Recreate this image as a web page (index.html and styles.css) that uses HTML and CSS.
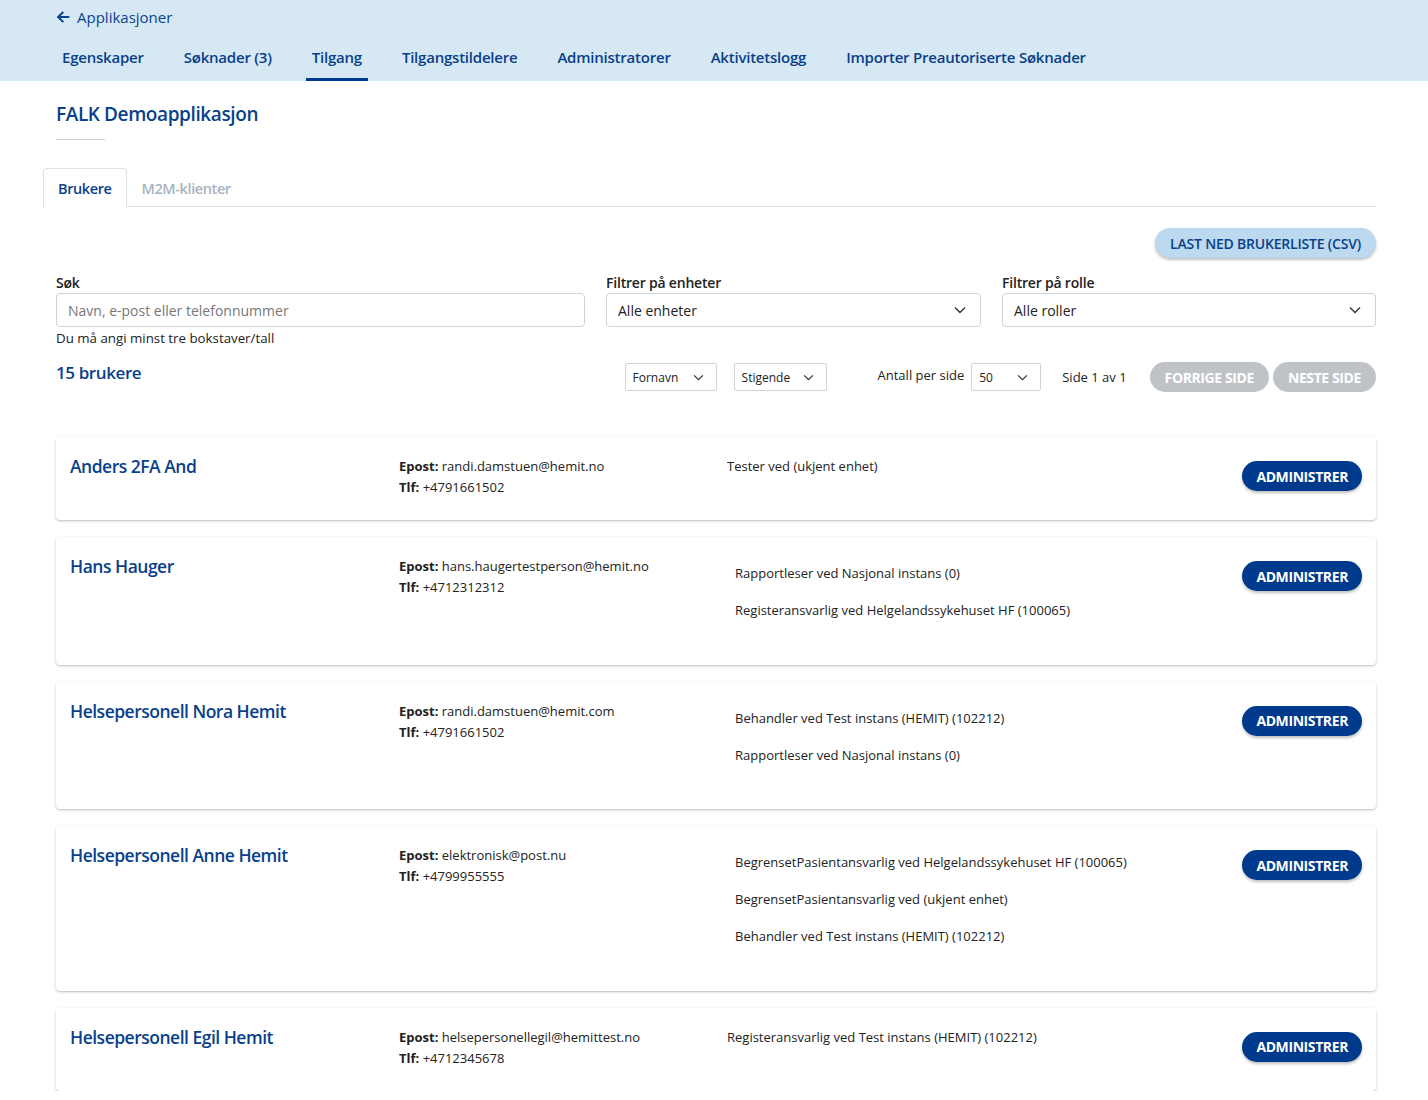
FILE: index.html
```html
<!DOCTYPE html>
<html lang="no">
<head>
<meta charset="utf-8">
<title>FALK Demoapplikasjon</title>
<link rel="stylesheet" href="styles.css">
</head>
<body>
<header class="topbar">
  <a class="back" href="#"><svg class="back-icon" viewBox="0 0 16 16" width="14" height="14"><path d="M14 8H3M7.5 3L2.5 8l5 5" fill="none" stroke="currentColor" stroke-width="2.4" stroke-linecap="square"/></svg>Applikasjoner</a>
  <nav class="nav">
    <a href="#" class="nav-item">Egenskaper</a>
    <a href="#" class="nav-item">Søknader (3)</a>
    <a href="#" class="nav-item active">Tilgang</a>
    <a href="#" class="nav-item">Tilgangstildelere</a>
    <a href="#" class="nav-item">Administratorer</a>
    <a href="#" class="nav-item">Aktivitetslogg</a>
    <a href="#" class="nav-item">Importer Preautoriserte Søknader</a>
  </nav>
</header>

<main class="main">
  <h1 class="title">FALK Demoapplikasjon</h1>
  <div class="title-rule"></div>

  <div class="tabs">
    <div class="tab active">Brukere</div>
    <div class="tab">M2M-klienter</div>
  </div>

  <div class="download-row">
    <button class="btn-light">LAST NED BRUKERLISTE (CSV)</button>
  </div>

  <div class="filters">
    <div class="field">
      <label class="label">Søk</label>
      <div class="input placeholder">Navn, e-post eller telefonnummer</div>
      <div class="hint">Du må angi minst tre bokstaver/tall</div>
    </div>
    <div class="field">
      <label class="label">Filtrer på enheter</label>
      <div class="input select">Alle enheter<svg class="chev" viewBox="0 0 12 8" width="12" height="8"><path d="M1 1.5l5 5 5-5" fill="none" stroke="#333" stroke-width="1.4"/></svg></div>
    </div>
    <div class="field">
      <label class="label">Filtrer på rolle</label>
      <div class="input select">Alle roller<svg class="chev" viewBox="0 0 12 8" width="12" height="8"><path d="M1 1.5l5 5 5-5" fill="none" stroke="#333" stroke-width="1.4"/></svg></div>
    </div>
  </div>

  <div class="toolbar">
    <h2 class="count">15 brukere</h2>
    <div class="controls">
      <div class="mini-select w-fornavn">Fornavn<svg class="chev" viewBox="0 0 12 8" width="11" height="7"><path d="M1 1.5l5 5 5-5" fill="none" stroke="#333" stroke-width="1.4"/></svg></div>
      <div class="mini-select w-stigende">Stigende<svg class="chev" viewBox="0 0 12 8" width="11" height="7"><path d="M1 1.5l5 5 5-5" fill="none" stroke="#333" stroke-width="1.4"/></svg></div>
      <span class="per-page">Antall per side</span>
      <div class="mini-select w-num">50<svg class="chev" viewBox="0 0 12 8" width="11" height="7"><path d="M1 1.5l5 5 5-5" fill="none" stroke="#333" stroke-width="1.4"/></svg></div>
      <span class="page-info">Side 1 av 1</span>
      <div class="pager">
        <button class="btn-disabled">FORRIGE SIDE</button>
        <button class="btn-disabled">NESTE SIDE</button>
      </div>
    </div>
  </div>

  <section class="list">
    <article class="card">
      <div class="name">Anders 2FA And</div>
      <div class="contact"><div><b>Epost:</b> randi.damstuen@hemit.no</div><div><b>Tlf:</b> +4791661502</div></div>
      <div class="roles"><div>Tester ved (ukjent enhet)</div></div>
      <div class="action"><button class="btn-dark">ADMINISTRER</button></div>
    </article>

    <article class="card">
      <div class="name">Hans Hauger</div>
      <div class="contact"><div><b>Epost:</b> hans.haugertestperson@hemit.no</div><div><b>Tlf:</b> +4712312312</div></div>
      <div class="roles multi"><p>Rapportleser ved Nasjonal instans (0)</p><p>Registeransvarlig ved Helgelandssykehuset HF (100065)</p></div>
      <div class="action"><button class="btn-dark">ADMINISTRER</button></div>
    </article>

    <article class="card">
      <div class="name">Helsepersonell Nora Hemit</div>
      <div class="contact"><div><b>Epost:</b> randi.damstuen@hemit.com</div><div><b>Tlf:</b> +4791661502</div></div>
      <div class="roles multi"><p>Behandler ved Test instans (HEMIT) (102212)</p><p>Rapportleser ved Nasjonal instans (0)</p></div>
      <div class="action"><button class="btn-dark">ADMINISTRER</button></div>
    </article>

    <article class="card">
      <div class="name">Helsepersonell Anne Hemit</div>
      <div class="contact"><div><b>Epost:</b> elektronisk@post.nu</div><div><b>Tlf:</b> +4799955555</div></div>
      <div class="roles multi"><p>BegrensetPasientansvarlig ved Helgelandssykehuset HF (100065)</p><p>BegrensetPasientansvarlig ved (ukjent enhet)</p><p>Behandler ved Test instans (HEMIT) (102212)</p></div>
      <div class="action"><button class="btn-dark">ADMINISTRER</button></div>
    </article>

    <article class="card">
      <div class="name">Helsepersonell Egil Hemit</div>
      <div class="contact"><div><b>Epost:</b> helsepersonellegil@hemittest.no</div><div><b>Tlf:</b> +4712345678</div></div>
      <div class="roles"><div>Registeransvarlig ved Test instans (HEMIT) (102212)</div></div>
      <div class="action"><button class="btn-dark">ADMINISTRER</button></div>
    </article>
  </section>
</main>
</body>
</html>
```

FILE: styles.css
```css
* { box-sizing: border-box; }

body {
  margin: 0;
  font-family: "Open Sans", "Noto Sans", sans-serif;
  color: #222;
  background: #fff;
  font-size: 14px;
}

a { text-decoration: none; }

.topbar {
  background: #d6e8f4;
  height: 81px;
  padding: 0 0 0 56px;
  display: flex;
  flex-direction: column;
}

.back {
  display: flex;
  align-items: center;
  gap: 7px;
  color: #0a4390;
  font-size: 15px;
  margin-top: 7px;
  height: 20px;
}

.back-icon { color: #0a4390; }

.nav {
  display: flex;
  margin-top: 12px;
}

.nav-item {
  color: #0a3f8a;
  font-weight: 600;
  font-size: 15px;
  padding: 8px 6px 0;
  height: 42px;
  margin-right: 28px;
  border-bottom: 3px solid transparent;
  letter-spacing: -0.22px;
}
.nav-item.active { border-bottom-color: #003a8c; }

.main {
  padding: 0 52px 0 56px;
}

.title {
  color: #0a3f8a;
  font-size: 19px;
  font-weight: 600;
  margin: 20px 0 0;
  line-height: 26px;
  letter-spacing: -0.4px;
}

.title-rule {
  width: 49px;
  height: 1px;
  background: #c4d0dc;
  margin-top: 12px;
}

.tabs {
  display: flex;
  margin: 28px 0 0 -13px;
  border-bottom: 1px solid #dee2e6;
  height: 39px;
}

.tab {
  padding: 0 14px;
  line-height: 39px;
  font-size: 14.5px;
  font-weight: 600;
  color: #a8b3c0;
  border: 1px solid transparent;
  border-radius: 4px 4px 0 0;
  letter-spacing: -0.4px;
}
.tab.active {
  color: #0a3f8a;
  border-color: #dee2e6;
  border-bottom-color: #fff;
  background: #fff;
  height: 40px;
}

.download-row {
  display: flex;
  justify-content: flex-end;
  margin-top: 21px;
}

button { font-family: inherit; cursor: pointer; }

.btn-light {
  background: #bcd9ef;
  color: #0a3f8a;
  border: none;
  border-radius: 16px;
  height: 30px;
  padding: 0 15px;
  font-size: 14px;
  font-weight: 600;
  box-shadow: 0 2px 3px rgba(0,0,0,0.25);
  letter-spacing: -0.2px;
}

.filters {
  display: grid;
  grid-template-columns: 529px 375px 374px;
  gap: 21px;
  margin-top: 16px;
}

.label {
  display: block;
  font-size: 14px;
  font-weight: 600;
  color: #222;
  line-height: 18px;
  margin-bottom: 1px;
  letter-spacing: -0.2px;
}

.input {
  height: 34px;
  border: 1px solid #ced4da;
  border-radius: 4px;
  padding: 0 11px;
  display: flex;
  align-items: center;
  font-size: 14px;
  color: #222;
}
.input.placeholder { color: #777; }
.input.select { justify-content: space-between; padding-right: 14px; }

.hint {
  font-size: 13.3px;
  margin-top: 2px;
  line-height: 18px;
  color: #222;
}

.toolbar {
  display: flex;
  justify-content: space-between;
  align-items: flex-start;
  margin-top: 14px;
}

.count {
  color: #0a3f8a;
  font-size: 17px;
  font-weight: 600;
  margin: 0;
  line-height: 24px;
  letter-spacing: -0.4px;
}

.controls {
  display: flex;
  align-items: center;
  height: 30px;
  margin-top: 1px;
}

.mini-select {
  height: 28px;
  border: 1px solid #ced4da;
  border-radius: 2px;
  font-size: 12px;
  display: flex;
  align-items: center;
  justify-content: space-between;
  padding: 0 12px 0 7px;
  color: #222;
}
.w-fornavn { width: 92px; margin-right: 17px; }
.w-stigende { width: 93px; margin-right: 51px; }
.w-num { width: 70px; margin-left: 7px; margin-right: 21px; }

.per-page { font-size: 13px; margin-top: -5px; }
.page-info { font-size: 13px; margin-right: 23px; }

.pager { display: flex; gap: 4px; }

.btn-disabled {
  background: #bfc3c7;
  color: #fff;
  border: none;
  border-radius: 15px;
  height: 30px;
  padding: 0 15px;
  font-size: 14px;
  font-weight: 700;
  letter-spacing: -0.4px;
}

.list {
  margin-top: 45px;
  display: flex;
  flex-direction: column;
  gap: 17px;
}

.card {
  display: grid;
  grid-template-columns: 329px 328px 1fr auto;
  padding: 19px 14px 22px;
  border-radius: 4px;
  background: #fff;
  box-shadow: 0 1px 3px rgba(0,0,0,0.22), 0 1px 1px rgba(0,0,0,0.06);
}

.name {
  color: #0a3f8a;
  font-size: 17.5px;
  font-weight: 600;
  line-height: 21px;
  letter-spacing: -0.5px;
}

.contact {
  font-size: 13px;
  line-height: 21px;
}
.contact b { font-weight: 700; }

.roles {
  font-size: 13px;
  line-height: 21px;
}
.roles.multi { padding: 7px 8px 6px; }
.roles p { margin: 0 0 16px; }
.roles p:last-child { margin-bottom: 15.5px; }

.action { padding-top: 5px; }

.btn-dark {
  background: #003a8c;
  color: #fff;
  border: none;
  border-radius: 16px;
  height: 30px;
  padding: 0 14px;
  font-size: 14px;
  font-weight: 700;
  box-shadow: 0 2px 3px rgba(0,0,0,0.25);
  letter-spacing: -0.4px;
}
```
